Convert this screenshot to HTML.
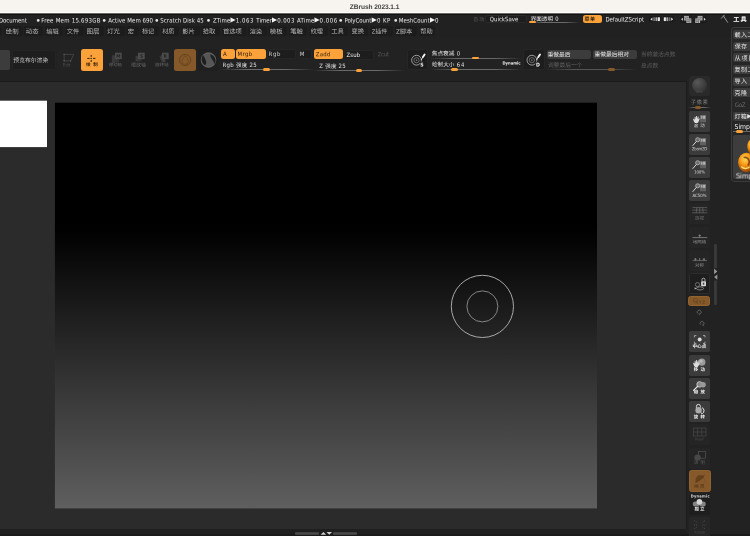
<!DOCTYPE html>
<html lang="zh">
<head>
<meta charset="utf-8">
<title>ZBrush 2023.1.1</title>
<style>
html,body{margin:0;padding:0;}
body{will-change:transform;width:750px;height:536px;overflow:hidden;background:#222;position:relative;font-family:"DejaVu Sans Condensed","Liberation Sans","Noto Sans CJK SC",sans-serif;color:#ddd;}
div,svg{position:absolute;box-sizing:border-box;white-space:nowrap;}
.t,.st{line-height:1;transform-origin:0 0;}
.c{line-height:1;text-align:center;}
#title{left:0;top:0;width:750px;height:14px;background:linear-gradient(to bottom,#f7f3ee 0,#f7f3ee 11.5px,#fefdfc 12.1px,#fefdfc 12.6px,#a9a7a4 13.2px,#2a2a2a 13.8px,#0e0e0e 14px);}
#status{left:0;top:14px;width:750px;height:11.6px;background:linear-gradient(to bottom,#0e0e0e 0,#141414 0.7px,#212121 1.4px);}
.st{color:#ececec;}
#menurow{left:0;top:25.6px;width:750px;height:12.4px;background:#212121;}
.mb{top:26.3px;height:10.1px;background:#1c1c1c;border-radius:2.5px;}
#toolbar{left:0;top:38px;width:750px;height:43px;background:#222;}
#docpanel{left:0;top:81px;width:687px;height:448.4px;background:#2b2b2b;border-top:1px solid #1a1a1a;border-right:1px solid #1b1b1b;}
#bottombar{left:0;top:529.3px;width:686.4px;height:7px;background:#1f1f1f;}
#bstrip{left:0;top:534.2px;width:750px;height:2px;background:#1a1a1a;}
.or{background:#fba23a;color:#2e1c08;}
.dor{background:#85592a;}
.b{border-radius:2px;}
.dkb{background:#1d1d1d;border:0.5px solid #262626}
.gb{background:#3c3c3c}
.sl{height:1px;background:linear-gradient(to right,rgba(110,110,110,0),#6a6a6a 30%,#6a6a6a 70%,rgba(110,110,110,0));}
.kn{height:3px;border-radius:1.5px;background:#fba23a;}
.kn.dor{background:#85592a;}
.sb{left:688.9px;width:21.2px;height:21.1px;border-radius:1.8px;background:#3b3b3b;}
.sb.dim{background:#252525;}
.sb.dk{background:#1e1e1e;border:0.5px solid #2c2c2c;}
.tp{left:733.4px;width:20px;height:9px;background:#3c3c3c;border-radius:2px;}
</style>
</head>
<body>
<div id="title"></div>
<div class="t" style="left:349px;top:3px;transform:translate(0.77px,0.99px) rotate(0.03deg);font-size:6.6px;color:#454545;font-weight:bold;letter-spacing:-0.068px;font-family:'Liberation Sans',sans-serif;">ZBrush 2023.1.1</div>
<div id="status"></div><div id="menurow"></div><div id="toolbar"></div><div id="docpanel"></div><div id="bottombar"></div><div id="bstrip"></div><svg style="left:0;top:90px" width="610" height="430" viewBox="0 90 610 430"><defs><linearGradient id="cg" x1="0" y1="0" x2="0" y2="1"><stop offset="0" stop-color="#000"/><stop offset="0.295" stop-color="#000"/><stop offset="0.315" stop-color="#010101"/><stop offset="0.34" stop-color="#040404"/><stop offset="1" stop-color="#5f5f5f"/></linearGradient></defs><rect x="0" y="100.7" width="47" height="46.4" fill="#fff"/><rect x="54.9" y="102.7" width="542.1" height="405.7" fill="url(#cg)"/></svg>
<div class="st" style="left:-2px;top:17px;transform:translate(0.90px,0.59px) rotate(0.03deg);font-size:6.05px;letter-spacing:-0.032px;">Document</div>
<svg style="left:35px;top:17px" width="8" height="7" viewBox="35 17 8 7"><circle cx="38.2" cy="20.45" r="1.35" fill="#e6e6e6"/></svg>
<div class="st" style="left:41px;top:17px;transform:translate(0.20px,0.59px) rotate(0.03deg);font-size:6.05px;letter-spacing:0.245px;">Free Mem 15.693GB</div>
<svg style="left:101px;top:17px" width="8" height="7" viewBox="101 17 8 7"><circle cx="104.2" cy="20.45" r="1.35" fill="#e6e6e6"/></svg>
<div class="st" style="left:108px;top:17px;transform:translate(0.30px,0.59px) rotate(0.03deg);font-size:6.05px;letter-spacing:0.060px;">Active Mem 690</div>
<svg style="left:153px;top:17px" width="8" height="7" viewBox="153 17 8 7"><circle cx="156.8" cy="20.45" r="1.35" fill="#e6e6e6"/></svg>
<div class="st" style="left:160px;top:17px;transform:translate(0.32px,0.59px) rotate(0.03deg);font-size:6.05px;letter-spacing:0.052px;">Scratch Disk 45</div>
<svg style="left:205px;top:17px" width="8" height="7" viewBox="205 17 8 7"><circle cx="208.5" cy="20.45" r="1.35" fill="#e6e6e6"/></svg>
<div class="st" style="left:213px;top:17px;transform:translate(0.05px,0.59px) rotate(0.03deg);font-size:6.05px;letter-spacing:0.050px;">ZTime</div>
<div class="t" style="left:230px;top:16px;transform:translate(0.60px,0.87px) rotate(0.03deg);font-size:6.6px;color:#f4f4f4;font-family:'DejaVu Sans',sans-serif;">▶</div>
<div class="st" style="left:235px;top:17px;transform:translate(0.68px,0.59px) rotate(0.03deg);font-size:6.05px;letter-spacing:0.550px;">1.063</div>
<div class="st" style="left:256px;top:17px;transform:translate(0.30px,0.59px) rotate(0.03deg);font-size:6.05px;letter-spacing:-0.025px;">Timer</div>
<div class="t" style="left:272px;top:16px;transform:translate(0.10px,0.87px) rotate(0.03deg);font-size:6.6px;color:#f4f4f4;font-family:'DejaVu Sans',sans-serif;">▶</div>
<div class="st" style="left:277px;top:17px;transform:translate(0.23px,0.59px) rotate(0.03deg);font-size:6.05px;letter-spacing:0.412px;">0.003</div>
<div class="st" style="left:297px;top:17px;transform:translate(0.00px,0.59px) rotate(0.03deg);font-size:6.05px;letter-spacing:0.188px;">ATime</div>
<div class="t" style="left:314px;top:16px;transform:translate(0.60px,0.87px) rotate(0.03deg);font-size:6.6px;color:#f4f4f4;font-family:'DejaVu Sans',sans-serif;">▶</div>
<div class="st" style="left:319px;top:17px;transform:translate(0.62px,0.59px) rotate(0.03deg);font-size:6.05px;letter-spacing:0.506px;">0.006</div>
<svg style="left:337px;top:17px" width="8" height="7" viewBox="337 17 8 7"><circle cx="340.7" cy="20.45" r="1.35" fill="#e6e6e6"/></svg>
<div class="st" style="left:344px;top:17px;transform:translate(0.50px,0.59px) rotate(0.03deg);font-size:6.05px;letter-spacing:-0.056px;">PolyCount</div>
<div class="t" style="left:371px;top:16px;transform:translate(0.70px,0.87px) rotate(0.03deg);font-size:6.6px;color:#f4f4f4;font-family:'DejaVu Sans',sans-serif;">▶</div>
<div class="st" style="left:376px;top:17px;transform:translate(0.93px,0.59px) rotate(0.03deg);font-size:6.05px;letter-spacing:0.400px;">0 KP</div>
<svg style="left:392px;top:17px" width="8" height="7" viewBox="392 17 8 7"><circle cx="395.7" cy="20.45" r="1.35" fill="#e6e6e6"/></svg>
<div class="st" style="left:398px;top:17px;transform:translate(0.80px,0.59px) rotate(0.03deg);font-size:6.05px;letter-spacing:0.053px;">MeshCount</div>
<div class="t" style="left:430px;top:16px;transform:translate(0.00px,0.87px) rotate(0.03deg);font-size:6.6px;color:#f4f4f4;font-family:'DejaVu Sans',sans-serif;">▶</div>
<div class="st" style="left:435px;top:17px;transform:translate(0.02px,0.59px) rotate(0.03deg);font-size:6.05px;">0</div>
<div class="t" style="left:473px;top:17px;transform:translate(0.25px,0.04px) rotate(0.03deg);font-size:4.9px;color:#585858;letter-spacing:1.050px;">自动</div>
<div class="b" style="left:484.8px;top:15.2px;width:42.4px;height:7.8px;background:#1d1d1d;border:0.5px solid #2a2a2a;border-radius:2.5px"></div>
<div class="st" style="left:489px;top:16px;transform:translate(0.75px,0.29px) rotate(0.03deg);font-size:6.05px;letter-spacing:-0.031px;">QuickSave</div>
<div class="t" style="left:530px;top:16px;transform:translate(0.65px,0.67px) rotate(0.03deg);font-size:5.6px;color:#ececec;letter-spacing:-0.017px;">界面透明</div>
<div class="t" style="left:555px;top:16px;transform:translate(0.23px,0.85px) rotate(0.03deg);font-size:5.8px;color:#ececec;">0</div>
<div class="sl" style="left:529px;top:21.8px;width:51px;"></div><div class="kn" style="left:528.7px;top:20.9px;width:7.2px;height:2.6px"></div>
<div class="or b" style="left:582.8px;top:15.4px;width:19.5px;height:7.8px;border-radius:2.5px"></div>
<div class="t" style="left:584px;top:16px;transform:translate(0.58px,0.81px) rotate(0.03deg);font-size:5.0px;color:#2e1c08;font-weight:bold;letter-spacing:0.450px;">菜单</div>
<div class="st" style="left:605px;top:16px;transform:translate(0.40px,0.39px) rotate(0.03deg);font-size:6.05px;letter-spacing:-0.058px;">DefaultZScript</div>
<svg style="left:648px;top:14px" width="62" height="11" viewBox="648 14 62 11">
<rect x="649.1" y="16.1" width="11.7" height="5.9" rx="1.8" fill="#191919"/><rect x="662.7" y="16.1" width="11.6" height="5.9" rx="1.8" fill="#191919"/>
<rect x="680" y="15.4" width="12.2" height="8" rx="1.8" fill="#1c1c1c"/><rect x="694.4" y="15.4" width="11.8" height="8" rx="1.8" fill="#1c1c1c"/>
<path d="M650.4 19.2l2-1.6v3.2z" fill="#e0e0e0"/><rect x="653.2" y="17.3" width="1.8" height="3.8" fill="#6e6e6e"/><rect x="655.5" y="17.3" width="1.8" height="3.8" fill="#a8a8a8"/><rect x="657.8" y="17.3" width="2.1" height="3.8" fill="#ececec"/>
<rect x="663.8" y="17.3" width="2.1" height="3.8" fill="#ececec"/><rect x="666.4" y="17.3" width="1.8" height="3.8" fill="#a8a8a8"/><rect x="668.7" y="17.3" width="1.8" height="3.8" fill="#6e6e6e"/><path d="M673.2 19.2l-2-1.6v3.2z" fill="#e0e0e0"/>
<path d="M681.1 19.3l1.8-1.5v3z" fill="#e0e0e0"/><rect x="684" y="15.9" width="4.9" height="4.6" fill="#b4b4b4"/><path d="M684 17.2h4.9M687.3 17.2v3.3" stroke="#555" stroke-width="0.55" fill="none"/><rect x="684.7" y="18.0" width="1.9" height="1.8" fill="#7a7a7a"/><rect x="686.4" y="18.4" width="4.9" height="4.6" fill="#b4b4b4"/><path d="M686.4 19.7h4.9M689.6999999999999 19.7v3.3" stroke="#555" stroke-width="0.55" fill="none"/><rect x="687.1" y="20.5" width="1.9" height="1.8" fill="#7a7a7a"/>
<rect x="697.6" y="15.9" width="4.9" height="4.6" fill="#b4b4b4"/><path d="M697.6 17.2h4.9M700.9 17.2v3.3" stroke="#555" stroke-width="0.55" fill="none"/><rect x="698.3000000000001" y="18.0" width="1.9" height="1.8" fill="#7a7a7a"/><rect x="695.2" y="18.4" width="4.9" height="4.6" fill="#b4b4b4"/><path d="M695.2 19.7h4.9M698.5 19.7v3.3" stroke="#555" stroke-width="0.55" fill="none"/><rect x="695.9000000000001" y="20.5" width="1.9" height="1.8" fill="#7a7a7a"/><path d="M705.7 19.3l-1.8-1.5v3z" fill="#e0e0e0"/>
</svg>
<svg style="left:719px;top:13px" width="12" height="12" viewBox="719 13 12 12"><path d="M721.4 18.3l2.9-3.2M723.5 16.1l4.1 6.2" stroke="#a0a0a0" stroke-width="0.9" fill="none" stroke-linecap="round"/></svg>
<div class="t" style="left:733px;top:16px;transform:translate(0.25px,0.46px) rotate(0.03deg);font-size:6.2px;color:#fff;font-weight:bold;letter-spacing:1.000px;">工具</div>
<div class="mb" style="left:-3px;width:4.9px"></div>
<div class="mb" style="left:4.2px;width:18.5px"></div>
<div class="t" style="left:5px;top:28px;transform:translate(0.65px,0.65px) rotate(0.03deg);font-size:6.41px;color:#b6b6b6;letter-spacing:0.075px;">绘制</div>
<div class="mb" style="left:24.4px;width:18.6px"></div>
<div class="t" style="left:25px;top:28px;transform:translate(0.73px,0.44px) rotate(0.03deg);font-size:6.37px;color:#b6b6b6;letter-spacing:0.100px;">动态</div>
<div class="mb" style="left:44.7px;width:18.8px"></div>
<div class="t" style="left:46px;top:28px;transform:translate(0.15px,0.63px) rotate(0.03deg);font-size:6.31px;color:#b6b6b6;letter-spacing:-0.025px;">编辑</div>
<div class="mb" style="left:65.2px;width:18.5px"></div>
<div class="t" style="left:66px;top:28px;transform:translate(0.65px,0.63px) rotate(0.03deg);font-size:6.27px;color:#b6b6b6;">文件</div>
<div class="mb" style="left:85.4px;width:18.8px"></div>
<div class="t" style="left:86px;top:28px;transform:translate(0.60px,0.63px) rotate(0.03deg);font-size:6.55px;color:#b6b6b6;letter-spacing:-0.050px;">图层</div>
<div class="mb" style="left:105.9px;width:18.7px"></div>
<div class="t" style="left:107px;top:28px;transform:translate(0.35px,0.43px) rotate(0.03deg);font-size:6.27px;color:#b6b6b6;">灯光</div>
<div class="mb" style="left:126.3px;width:12.3px"></div>
<div class="t" style="left:127px;top:28px;transform:translate(0.75px,0.58px) rotate(0.03deg);font-size:6.2px;color:#b6b6b6;">宏</div>
<div class="mb" style="left:140.3px;width:18.6px"></div>
<div class="t" style="left:141px;top:28px;transform:translate(0.88px,0.49px) rotate(0.03deg);font-size:6.2px;color:#b6b6b6;">标记</div>
<div class="mb" style="left:160.6px;width:18.7px"></div>
<div class="t" style="left:162px;top:28px;transform:translate(0.18px,0.54px) rotate(0.03deg);font-size:6.2px;color:#b6b6b6;">材质</div>
<div class="mb" style="left:181.0px;width:18.5px"></div>
<div class="t" style="left:182px;top:28px;transform:translate(0.32px,0.63px) rotate(0.03deg);font-size:6.35px;color:#b6b6b6;letter-spacing:-0.050px;">影片</div>
<div class="mb" style="left:201.2px;width:18.7px"></div>
<div class="t" style="left:202px;top:28px;transform:translate(0.65px,0.61px) rotate(0.03deg);font-size:6.34px;color:#b6b6b6;letter-spacing:0.075px;">拾取</div>
<div class="mb" style="left:221.6px;width:25.0px"></div>
<div class="t" style="left:222px;top:28px;transform:translate(0.93px,0.47px) rotate(0.03deg);font-size:6.34px;color:#b6b6b6;letter-spacing:0.012px;">首选项</div>
<div class="mb" style="left:248.3px;width:18.3px"></div>
<div class="t" style="left:249px;top:28px;transform:translate(0.75px,0.69px) rotate(0.03deg);font-size:6.27px;color:#b6b6b6;">渲染</div>
<div class="mb" style="left:268.3px;width:18.7px"></div>
<div class="t" style="left:269px;top:28px;transform:translate(0.75px,0.64px) rotate(0.03deg);font-size:6.42px;color:#b6b6b6;letter-spacing:0.025px;">模板</div>
<div class="mb" style="left:288.7px;width:18.8px"></div>
<div class="t" style="left:290px;top:28px;transform:translate(0.15px,0.52px) rotate(0.03deg);font-size:6.38px;color:#b6b6b6;letter-spacing:0.050px;">笔触</div>
<div class="mb" style="left:309.2px;width:18.8px"></div>
<div class="t" style="left:310px;top:28px;transform:translate(0.65px,0.57px) rotate(0.03deg);font-size:6.2px;color:#b6b6b6;">纹理</div>
<div class="mb" style="left:329.7px;width:18.8px"></div>
<div class="t" style="left:331px;top:28px;transform:translate(0.15px,0.62px) rotate(0.03deg);font-size:6.27px;color:#b6b6b6;">工具</div>
<div class="mb" style="left:350.2px;width:18.3px"></div>
<div class="t" style="left:351px;top:28px;transform:translate(0.52px,0.61px) rotate(0.03deg);font-size:6.33px;color:#b6b6b6;">变换</div>
<div class="mb" style="left:370.2px;width:22.6px"></div>
<div class="t" style="left:371px;top:28px;transform:translate(0.65px,0.51px) rotate(0.03deg);font-size:6.01px;color:#b6b6b6;letter-spacing:-0.025px;">Z插件</div>
<div class="mb" style="left:394.5px;width:22.6px"></div>
<div class="t" style="left:395px;top:28px;transform:translate(0.95px,0.65px) rotate(0.03deg);font-size:6.3px;color:#b6b6b6;">Z脚本</div>
<div class="mb" style="left:418.8px;width:15.8px"></div>
<div class="t" style="left:420px;top:28px;transform:translate(0.25px,0.59px) rotate(0.03deg);font-size:6.21px;color:#b6b6b6;letter-spacing:-0.050px;">帮助</div>
<div style="left:0;top:49.6px;width:10px;height:20.8px;background:#3c3c3c;border-radius:0 2px 2px 0"></div>
<div class="b" style="left:11.5px;top:49.6px;width:44.8px;height:20.8px;background:#1e1e1e;border:0.5px solid #242424"></div>
<div class="t" style="left:13px;top:58px;transform:translate(0.35px,0.13px) rotate(0.03deg);font-size:5.83px;color:#c8c8c8;letter-spacing:-0.020px;">预览布尔渲染</div>
<div class="b" style="left:58.1px;top:49.4px;width:22.2px;height:20.9px;background:#232323;border-radius:2.5px"></div>
<svg style="left:58px;top:49px" width="23" height="22" viewBox="58 49 23 22"><path d="M64.1 54.4H73.8L70.6 60.9H64.1z" fill="none" stroke="#4a4a4a" stroke-width="0.8"/><path d="M63.5 53.8h1.3v1.3h-1.3zM63.5 60.2h1.3v1.3h-1.3zM69.9 60.2h1.3v1.3h-1.3z" fill="#5a5a5a"/></svg>
<div class="t" style="left:62px;top:63px;transform:translate(0.73px,0.56px) rotate(0.03deg);font-size:4.4px;color:#4e4e4e;letter-spacing:-0.017px;">Edit</div>
<div class="or b" style="left:81.4px;top:49px;width:21.9px;height:22px;border-radius:2.5px"></div>
<svg style="left:81.4px;top:49px" width="21.9" height="22" viewBox="81.4 49 21.9 22"><g stroke="#2e1c08" stroke-width="1" fill="none" stroke-linecap="round"><path d="M91.6 55.3v1.2M91.6 60.3v1.2M88.1 58.4h1.5M93.9 58.4h1.5"/><path d="M91.3 58.4h0.6"/></g></svg>
<div class="t" style="left:85px;top:63px;transform:translate(0.97px,0.05px) rotate(0.03deg);font-size:4.5px;color:#2e1c08;font-weight:bold;">绘</div>
<div class="t" style="left:93px;top:63px;transform:translate(0.17px,0.12px) rotate(0.03deg);font-size:4.5px;color:#2e1c08;font-weight:bold;">制</div>
<svg style="left:109px;top:50px" width="16" height="16" viewBox="109 50 16 16"><rect x="111.9" y="55.3" width="3.4" height="8" fill="#3a3a3a"/><rect x="115" y="58.8" width="4" height="3.4" fill="#343434"/><rect x="115" y="52.7" width="6.7" height="6.4" fill="#4c4c4c"/></svg>
<div class="t" style="left:116px;top:54px;transform:translate(0.16px,0.70px) rotate(0.03deg);font-size:4.8px;color:#242424;font-weight:bold;">M</div>
<div class="t" style="left:108px;top:63px;transform:translate(0.97px,0.31px) rotate(0.03deg);font-size:4.34px;color:#626262;letter-spacing:-0.012px;">移动轴</div>
<svg style="left:132.1px;top:50px" width="16" height="16" viewBox="132.1 50 16 16"><rect x="135.7" y="55.8" width="3" height="5.6" fill="#3a3a3a"/><rect x="138.1" y="58.8" width="3.6" height="2.6" fill="#343434"/><rect x="138.1" y="52.7" width="6.7" height="6.4" fill="#4c4c4c"/></svg>
<div class="t" style="left:139px;top:54px;transform:translate(0.89px,0.70px) rotate(0.03deg);font-size:4.8px;color:#242424;font-weight:bold;">S</div>
<div class="t" style="left:131px;top:62px;transform:translate(0.05px,0.45px) rotate(0.03deg);font-size:4.93px;color:#626262;letter-spacing:0.037px;">缩放轴</div>
<svg style="left:155.9px;top:50px" width="16" height="16" viewBox="155.9 50 16 16"><path d="M159.3 56.6l3.4-2 2.6 6.4-3.6 1.4z" fill="#383838"/><path d="M160.70000000000002 55.6l3-1 2 6.8-3 1z" fill="#404040"/><rect x="161.9" y="52.7" width="6.7" height="6.4" fill="#4c4c4c"/></svg>
<div class="t" style="left:163px;top:54px;transform:translate(0.44px,0.70px) rotate(0.03deg);font-size:4.8px;color:#242424;font-weight:bold;">R</div>
<div class="t" style="left:155px;top:63px;transform:translate(0.07px,0.36px) rotate(0.03deg);font-size:4.54px;color:#626262;letter-spacing:-0.025px;">旋转轴</div>
<div class="dor b" style="left:174px;top:49px;width:22.2px;height:22px;border-radius:2.5px"></div>
<svg style="left:174px;top:49px" width="22.2" height="22" viewBox="174 49 22.2 22"><circle cx="185.1" cy="60" r="5.6" fill="none" stroke="#5e3c1a" stroke-width="0.8"/><path d="M185.1 55.6c1.8 2.4 3.2 4 3.2 5.6a3.2 3.2 0 0 1-6.4 0c0-1.6 1.4-3.2 3.2-5.6z" fill="none" stroke="#684219" stroke-width="0.7"/></svg>
<div class="b" style="left:197.7px;top:49.2px;width:21.7px;height:22px;background:#1f1f1f"></div>
<svg style="left:199px;top:51px" width="19" height="18" viewBox="199 51 19 18"><circle cx="208.5" cy="60" r="7.3" fill="#565656" stroke="#727272" stroke-width="0.7"/><path d="M203.2 55.1A6.9 6.9 0 0 0 204.7 65.2Q206.6 64.4 206.2 62Q205.8 59.6 204.7 57.9Q203.9 56.6 203.2 55.1z" fill="#1e1e1e"/><path d="M210.2 54.2A6.9 6.9 0 0 1 214.7 64.2Q213.9 62 213.3 61.3Q212.4 59.9 211.6 58.6Q210.4 56.6 210.2 54.2z" fill="#1e1e1e"/></svg>
<div class="b or" style="left:221.1px;top:49.3px;width:13.6px;height:9.8px;border-radius:2.5px"></div>
<div class="t" style="left:222px;top:51px;transform:translate(0.90px,0.05px) rotate(0.03deg);font-size:6px;color:#2e1c08;">A</div>
<div class="b or" style="left:236.4px;top:49.3px;width:29.2px;height:9.8px;border-radius:2.5px"></div>
<div class="t" style="left:237px;top:51px;transform:translate(0.50px,0.05px) rotate(0.03deg);font-size:6px;color:#2e1c08;letter-spacing:0.375px;">Mrgb</div>
<div class="b dkb" style="left:267.3px;top:49.3px;width:29.0px;height:9.8px;border-radius:2.5px"></div>
<div class="t" style="left:268px;top:51px;transform:translate(0.60px,0.05px) rotate(0.03deg);font-size:6px;color:#d0d0d0;letter-spacing:0.662px;">Rgb</div>
<div class="b dkb" style="left:298.7px;top:49.3px;width:13.6px;height:9.8px;border-radius:2.5px"></div>
<div class="t" style="left:299px;top:51px;transform:translate(0.80px,0.05px) rotate(0.03deg);font-size:6px;color:#d0d0d0;">M</div>
<div class="b or" style="left:314px;top:49.3px;width:29.1px;height:9.8px;border-radius:2.5px"></div>
<div class="t" style="left:315px;top:51px;transform:translate(0.75px,0.15px) rotate(0.03deg);font-size:6px;color:#2e1c08;letter-spacing:0.192px;">Zadd</div>
<div class="b dkb" style="left:344.4px;top:50.2px;width:29.6px;height:9.5px;border-radius:2.5px"></div>
<div class="t" style="left:346px;top:52px;transform:translate(0.45px,0.10px) rotate(0.03deg);font-size:6px;color:#f0f0f0;letter-spacing:0.142px;">Zsub</div>
<div class="t" style="left:377px;top:51px;transform:translate(0.75px,0.30px) rotate(0.03deg);font-size:6px;color:#555;letter-spacing:-0.325px;">Zcut</div>
<div class="t" style="left:222px;top:62px;transform:translate(0.40px,0.05px) rotate(0.03deg);font-size:6.0px;color:#e0e0e0;letter-spacing:0.300px;">Rgb <span style="font-size:5.5px">强度</span> 25</div>
<div class="sl" style="left:220px;top:69.1px;width:94px"></div><div class="kn" style="left:263.3px;top:68.2px;width:6.7px;height:2.8px"></div>
<div class="t" style="left:319px;top:63px;transform:translate(0.35px,0.00px) rotate(0.03deg);font-size:6.0px;color:#e0e0e0;letter-spacing:0.221px;">Z <span style="font-size:5.5px">强度</span> 25</div>
<div class="sl" style="left:313px;top:69.9px;width:92px"></div><div class="kn" style="left:355.7px;top:69px;width:6.7px;height:2.8px"></div>
<div class="b" style="left:406.7px;top:49.3px;width:21.5px;height:21.1px;background:#1d1d1d;border:0.5px solid #262626;border-radius:2.5px"></div>
<svg style="left:406.7px;top:49.3px" width="21.5" height="21.1" viewBox="406.7 49.3 21.5 21.1"><circle cx="416.2" cy="60.5" r="4.9" fill="none" stroke="#c4c4c4" stroke-width="0.75"/><circle cx="416.2" cy="60.5" r="2.6" fill="none" stroke="#9a9a9a" stroke-width="0.6"/><path d="M415.4 60.5h1.6M416.2 59.7v1.6" stroke="#bbb" stroke-width="0.4"/><rect x="419.59999999999997" y="61.9" width="5" height="5.4" fill="#1d1d1d"/><path d="M421.09999999999997 60.0l1.3-2.4" stroke="#ddd" stroke-width="1" stroke-linecap="round"/><path d="M422.59999999999997 57.3l1.7-2.5" stroke="#f6f6f6" stroke-width="1.9" stroke-linecap="round"/></svg>
<div class="t" style="left:420px;top:62px;transform:translate(0.32px,0.39px) rotate(0.03deg);font-size:5.2px;color:#f0f0f0;font-weight:bold;">S</div>
<div class="b" style="left:523px;top:49.3px;width:21.5px;height:21.1px;background:#1d1d1d;border:0.5px solid #262626;border-radius:2.5px"></div>
<svg style="left:523px;top:49.3px" width="21.5" height="21.1" viewBox="523 49.3 21.5 21.1"><circle cx="531.9" cy="60.5" r="4.9" fill="none" stroke="#c4c4c4" stroke-width="0.75"/><circle cx="531.9" cy="60.5" r="2.6" fill="none" stroke="#9a9a9a" stroke-width="0.6"/><path d="M531.1 60.5h1.6M531.9 59.7v1.6" stroke="#bbb" stroke-width="0.4"/><rect x="535.3" y="61.9" width="5" height="5.4" fill="#1d1d1d"/><path d="M536.8 60.0l1.3-2.4" stroke="#ddd" stroke-width="1" stroke-linecap="round"/><path d="M538.3 57.3l1.7-2.5" stroke="#f6f6f6" stroke-width="1.9" stroke-linecap="round"/></svg>
<div class="t" style="left:536px;top:62px;transform:translate(0.12px,0.39px) rotate(0.03deg);font-size:5.2px;color:#f0f0f0;font-weight:bold;">D</div>
<div class="t" style="left:431px;top:51px;transform:translate(0.85px,0.21px) rotate(0.03deg);font-size:5.65px;color:#e0e0e0;letter-spacing:-0.008px;">焦点衰减</div>
<div class="t" style="left:456px;top:51px;transform:translate(0.73px,0.45px) rotate(0.03deg);font-size:5.8px;color:#e0e0e0;">0</div>
<div class="sl" style="left:430px;top:57.5px;width:92px"></div><div class="kn" style="left:472px;top:56.5px;width:7.4px;height:2.9px"></div>
<div class="t" style="left:431px;top:62px;transform:translate(0.98px,0.37px) rotate(0.03deg);font-size:5.58px;color:#e0e0e0;letter-spacing:0.033px;">绘制大小</div>
<div class="t" style="left:456px;top:62px;transform:translate(0.73px,0.75px) rotate(0.03deg);font-size:5.8px;color:#e0e0e0;letter-spacing:1.000px;">64</div>
<div class="sl" style="left:430px;top:68.8px;width:92px"></div><div class="kn" style="left:451px;top:68px;width:7.2px;height:2.9px"></div>
<div class="t" style="left:502px;top:61px;transform:translate(0.43px,0.50px) rotate(0.03deg);font-size:4.2px;color:#f0f0f0;font-weight:bold;letter-spacing:-0.021px;">Dynamic</div>
<div class="b gb" style="left:546.7px;top:49.7px;width:44.2px;height:9.1px;border-radius:2.5px"></div>
<div class="t" style="left:547px;top:52px;transform:translate(0.65px,0.49px) rotate(0.03deg);font-size:5.67px;color:#ececec;letter-spacing:0.025px;">重做最后</div>
<div class="b gb" style="left:593.1px;top:49.7px;width:44px;height:9.2px;border-radius:2.5px"></div>
<div class="t" style="left:594px;top:52px;transform:translate(0.45px,0.28px) rotate(0.03deg);font-size:5.75px;color:#ececec;">重做最后相对</div>
<div class="t" style="left:548px;top:62px;transform:translate(0.05px,0.91px) rotate(0.03deg);font-size:5.71px;color:#606060;letter-spacing:0.010px;">调整最后一个</div>
<div class="sl" style="left:546px;top:69.1px;width:91px;opacity:.7"></div><div class="kn dor" style="left:608px;top:68.2px;width:7.1px;height:2.8px"></div>
<div class="t" style="left:640px;top:52px;transform:translate(0.67px,0.12px) rotate(0.03deg);font-size:5.8px;color:#5e5e5e;">当前激活点数</div>
<div class="t" style="left:641px;top:63px;transform:translate(0.05px,0.39px) rotate(0.03deg);font-size:5.73px;color:#5e5e5e;letter-spacing:-0.025px;">总点数</div>
<svg style="left:445px;top:269px" width="76" height="76" viewBox="0 0 76 76"><circle cx="37.4" cy="37.4" r="31.1" fill="none" stroke="#b8b8b8" stroke-width="0.9"/><circle cx="37.4" cy="37.4" r="15.5" fill="none" stroke="#a0a0a0" stroke-width="0.8"/></svg>
<div style="left:294.8px;top:531.6px;width:24.2px;height:3.2px;background:linear-gradient(#3a3a3a,#4a4a4a 50%,#3a3a3a);border-radius:1px"></div><div style="left:332.5px;top:531.6px;width:24.8px;height:3.2px;background:linear-gradient(#3a3a3a,#4a4a4a 50%,#3a3a3a);border-radius:1px"></div>
<svg style="left:319px;top:530px" width="14" height="6" viewBox="319 530 14 6"><path d="M320.6 534.8l2.75-2.9 2.75 2.9z" fill="#d0d0d0"/><path d="M326.5 532h5.5l-2.75 2.8z" fill="#d0d0d0"/></svg>
<div style="left:714.1px;top:243.5px;width:2.5px;height:61.2px;background:#383838;border-radius:1px"></div>
<svg style="left:712px;top:266px" width="8" height="16" viewBox="0 0 8 16"><rect x="1.6" y="2" width="3.6" height="12.4" fill="#222"/><path d="M2.1 2.6l3.2 2.8-3.2 2.8z" fill="#999"/><path d="M5.3 8.4l-3.2 2.7 3.2 2.7z" fill="#999"/></svg>
<div class="b" style="left:688.7px;top:75.9px;width:21.5px;height:20.6px;background:#2a2a2a;border-radius:2.5px"></div>
<svg style="left:688.7px;top:75.9px" width="21.5" height="20.6" viewBox="0 0 21.5 20.6"><defs><radialGradient id="sg" cx="0.35" cy="0.3" r="0.8"><stop offset="0" stop-color="#585858"/><stop offset="1" stop-color="#2e2e2e"/></radialGradient></defs><circle cx="10.6" cy="9.5" r="7.4" fill="url(#sg)"/></svg>
<div class="t" style="left:696px;top:90px;transform:translate(0.31px,0.83px) rotate(0.03deg);font-size:3.4px;color:#555;">SPix</div>
<div class="t" style="left:690px;top:99px;transform:translate(0.65px,0.94px) rotate(0.03deg);font-size:5.4px;color:#808080;letter-spacing:0.525px;">子像素</div>
<div class="sl" style="left:688px;top:106.7px;width:23px"></div><div class="kn dor" style="left:694.8px;top:105.7px;width:6.7px;height:2.9px"></div>
<div class="sb " style="top:110.5px"><svg style="left:0;top:0" width="21.2" height="20.9" viewBox="0 0 21.2 20.9"><rect x="11.1" y="4.1" width="5.9" height="7.1" fill="#747474"/><rect x="12.2" y="4.9" width="4" height="2.8" fill="#b4b4b4"/><path d="M11.1 8.9h5.9M11.1 10.2h5.9" stroke="#4a4a4a" stroke-width="0.6"/><path d="M13.6 4.1v7.1" stroke="#555" stroke-width="0.5"/><path d="M4.3 7.9l0.7-0.4 0.9 1.4 -0.3-3 0.8-0.2 0.6 2.5 0.1-3.2 0.8-0.1 0.4 3.2 0.5-2.7 0.8 0.2-0.2 3 0.7-1.3 0.6 0.4-1 2.9c-0.3 0.7-0.6 1.1-1 1.4h-2.7c-0.8-0.9-1.5-2.2-1.9-4.1z" fill="#dedede"/></svg></div>
<div class="t" style="left:693px;top:124px;transform:translate(0.65px,0.14px) rotate(0.03deg);font-size:4.4px;color:#d4d4d4;">滚</div>
<div class="t" style="left:700px;top:123px;transform:translate(0.15px,0.94px) rotate(0.03deg);font-size:4.4px;color:#d4d4d4;">动</div>
<div class="sb " style="top:133.9px"><svg style="left:0;top:0" width="21.2" height="20.9" viewBox="0 0 21.2 20.9"><rect x="11.1" y="4.1" width="5.9" height="7.1" fill="#747474"/><rect x="12.2" y="4.9" width="4" height="2.8" fill="#b4b4b4"/><path d="M11.1 8.9h5.9M11.1 10.2h5.9" stroke="#4a4a4a" stroke-width="0.6"/><path d="M13.6 4.1v7.1" stroke="#555" stroke-width="0.5"/><circle cx="8.7" cy="5.8" r="2.1" fill="#6c6c6c" stroke="#c4c4c4" stroke-width="0.7"/><path d="M7.2 7.6l-3.3 3.9" stroke="#d4d4d4" stroke-width="1" stroke-linecap="round"/></svg></div>
<div class="t" style="left:691px;top:147px;transform:translate(0.98px,0.26px) rotate(0.03deg);font-size:4.4px;color:#d8d8d8;letter-spacing:-0.345px;">Zoom2D</div>
<div class="sb " style="top:157.0px"><svg style="left:0;top:0" width="21.2" height="20.9" viewBox="0 0 21.2 20.9"><rect x="11.1" y="4.1" width="5.9" height="7.1" fill="#747474"/><rect x="12.2" y="4.9" width="4" height="2.8" fill="#b4b4b4"/><path d="M11.1 8.9h5.9M11.1 10.2h5.9" stroke="#4a4a4a" stroke-width="0.6"/><path d="M13.6 4.1v7.1" stroke="#555" stroke-width="0.5"/><circle cx="8.7" cy="5.8" r="2.1" fill="#6c6c6c" stroke="#c4c4c4" stroke-width="0.7"/><path d="M7.2 7.6l-3.3 3.9" stroke="#d4d4d4" stroke-width="1" stroke-linecap="round"/></svg></div>
<div class="t" style="left:694px;top:170px;transform:translate(0.12px,0.56px) rotate(0.03deg);font-size:4.4px;color:#d8d8d8;letter-spacing:-0.150px;">100%</div>
<div class="sb " style="top:180.1px"><svg style="left:0;top:0" width="21.2" height="20.9" viewBox="0 0 21.2 20.9"><rect x="11.1" y="4.1" width="5.9" height="7.1" fill="#747474"/><rect x="12.2" y="4.9" width="4" height="2.8" fill="#b4b4b4"/><path d="M11.1 8.9h5.9M11.1 10.2h5.9" stroke="#4a4a4a" stroke-width="0.6"/><path d="M13.6 4.1v7.1" stroke="#555" stroke-width="0.5"/><circle cx="8.7" cy="5.8" r="2.1" fill="#6c6c6c" stroke="#c4c4c4" stroke-width="0.7"/><path d="M7.2 7.6l-3.3 3.9" stroke="#d4d4d4" stroke-width="1" stroke-linecap="round"/></svg></div>
<div class="t" style="left:692px;top:194px;transform:translate(0.40px,0.06px) rotate(0.03deg);font-size:4.4px;color:#d8d8d8;">AC50%</div>
<div class="sb dim" style="top:203.3px"><svg style="left:0;top:0" width="21.2" height="20.9" viewBox="0 0 21.2 20.9"><g stroke="#6e6e6e" stroke-width="0.65" fill="none"><path d="M3.4 4.6h14.6M3.2 7.1h15M3 9.8h15.4"/><path d="M7.8 4.6l-0.6 5.2M10.7 4.6v5.2M13.6 4.6l0.6 5.2"/></g></svg></div>
<div class="t" style="left:694px;top:216px;transform:translate(0.81px,0.74px) rotate(0.03deg);font-size:4.6px;color:#6c6c6c;">透视</div>
<div class="sb dim" style="top:226.7px"><svg style="left:0;top:0" width="21.2" height="20.9" viewBox="0 0 21.2 20.9"><path d="M3.4 10.6h14.8" stroke="#8a8a8a" stroke-width="0.8"/><path d="M10.7 7.4v3.2M9.5 8.6h2.4" stroke="#8a8a8a" stroke-width="0.8"/></svg></div>
<div class="t" style="left:692px;top:240px;transform:translate(0.88px,0.55px) rotate(0.03deg);font-size:4.4px;color:#8a8a8a;">地网格</div>
<div class="sb dim" style="top:250.1px"><svg style="left:0;top:0" width="21.2" height="20.9" viewBox="0 0 21.2 20.9"><path d="M3.6 10.6h14.4" stroke="#7a7a7a" stroke-width="0.7"/><path d="M6.4 8v2.6M5.2 9.2h2.4M10.7 8v2.6M15 8v2.6M13.8 9.2h2.4" stroke="#8a8a8a" stroke-width="0.8"/></svg></div>
<div class="t" style="left:694px;top:263px;transform:translate(0.88px,0.68px) rotate(0.03deg);font-size:4.6px;color:#8a8a8a;">对称</div>
<div class="sb dk" style="top:273.4px"><svg style="left:0;top:0" width="21.2" height="20.9" viewBox="0 0 21.2 20.9"><rect x="11.1" y="7.2" width="4.9" height="5" rx="0.7" fill="#d4d4d4"/><path d="M12 7.2v-1.5a1.5 1.5 0 0 1 3 0v1.5" fill="none" stroke="#c8c8c8" stroke-width="0.8"/><rect x="12.8" y="8.7" width="1.5" height="2" fill="#444"/><circle cx="7.5" cy="10.6" r="2.1" fill="none" stroke="#8c8c8c" stroke-width="0.7"/><ellipse cx="10" cy="14.4" rx="3.6" ry="1.6" fill="none" stroke="#a0a0a0" stroke-width="0.75"/><path d="M4.6 13.2l2.2 1.2-2.2 1.2z" fill="#b8b8b8"/></svg></div>
<div class="dor b" style="left:688.3px;top:295.9px;width:21.9px;height:10.4px;border-radius:2.5px;border:0.5px solid #93642e"></div>
<svg style="left:688.3px;top:296px" width="21.9" height="10.3" viewBox="688.3 296 21.9 10.3"><path d="M698 300.6a2.2 2 0 1 0-3.6 1.4M694.6 300.6l-0.3 1.6 1.6-0.2" fill="none" stroke="#694420" stroke-width="0.7"/></svg>
<div class="t" style="left:695px;top:300px;transform:translate(0.27px,0.81px) rotate(0.03deg);font-size:4.4px;color:#694420;font-weight:bold;letter-spacing:0.500px;">XYZ</div>
<svg style="left:695px;top:308px" width="12" height="22" viewBox="0 0 12 22"><g fill="none" stroke="#777" stroke-width="0.7"><path d="M2.6 5.4a2 2 0 1 1 2.4 0.6"/><path d="M4.2 5.2v2"/><path d="M5.4 16.6a2 2 0 1 1 2.6 0.6"/><path d="M7.4 16.6l1.4 1.6"/></g></svg>
<div class="sb " style="top:331.1px"><svg style="left:0;top:0" width="21.2" height="20.9" viewBox="0 0 21.2 20.9"><g fill="none" stroke="#c4c4c4" stroke-width="0.75"><path d="M5.4 6.4v-1.8h2M16 6.4v-1.8h-2M5.4 10.6v1.8h2M16 10.6v1.8h-2"/></g><circle cx="10.7" cy="8.6" r="2" fill="#ddd"/></svg></div>
<div class="t" style="left:692px;top:344px;transform:translate(0.50px,0.65px) rotate(0.03deg);font-size:4.6px;color:#f4f4f4;font-weight:bold;">中心点</div>
<div class="sb " style="top:354.5px"><svg style="left:0;top:0" width="21.2" height="20.9" viewBox="0 0 21.2 20.9"><circle cx="12.8" cy="7.2" r="3.6" fill="#9a9a9a"/><circle cx="12" cy="6.2" r="1.6" fill="#bbb"/><path d="M4.3 7.9l0.7-0.4 0.9 1.4 -0.3-3 0.8-0.2 0.6 2.5 0.1-3.2 0.8-0.1 0.4 3.2 0.5-2.7 0.8 0.2-0.2 3 0.7-1.3 0.6 0.4-1 2.9c-0.3 0.7-0.6 1.1-1 1.4h-2.7c-0.8-0.9-1.5-2.2-1.9-4.1z" fill="#dedede"/></svg></div>
<div class="t" style="left:693px;top:367px;transform:translate(0.77px,0.82px) rotate(0.03deg);font-size:4.4px;color:#f0f0f0;font-weight:bold;">移</div>
<div class="t" style="left:700px;top:367px;transform:translate(0.48px,0.94px) rotate(0.03deg);font-size:4.4px;color:#f0f0f0;font-weight:bold;">动</div>
<div class="sb " style="top:377.6px"><svg style="left:0;top:0" width="21.2" height="20.9" viewBox="0 0 21.2 20.9"><circle cx="10.6" cy="6.4" r="2.8" fill="#888" stroke="#ddd" stroke-width="0.7"/><circle cx="14" cy="6.8" r="2.8" fill="#9a9a9a"/><path d="M8.6 8.4l-4 4" stroke="#eee" stroke-width="1.3" stroke-linecap="round"/></svg></div>
<div class="t" style="left:693px;top:390px;transform:translate(0.77px,0.33px) rotate(0.03deg);font-size:4.4px;color:#f0f0f0;font-weight:bold;">缩</div>
<div class="t" style="left:700px;top:390px;transform:translate(0.48px,0.31px) rotate(0.03deg);font-size:4.4px;color:#f0f0f0;font-weight:bold;">放</div>
<div class="sb " style="top:400.9px"><svg style="left:0;top:0" width="21.2" height="20.9" viewBox="0 0 21.2 20.9"><circle cx="9.6" cy="9.2" r="3.2" fill="#aaa"/><path d="M7.4 6.8v-1.4a2 2 0 0 1 4 0v1" fill="none" stroke="#ddd" stroke-width="1"/><path d="M13 6.6a3.4 3.4 0 0 1 0.4 6l-1.4-0.6" fill="none" stroke="#eee" stroke-width="1"/></svg></div>
<div class="t" style="left:693px;top:415px;transform:translate(0.77px,0.18px) rotate(0.03deg);font-size:4.4px;color:#f0f0f0;font-weight:bold;">旋</div>
<div class="t" style="left:700px;top:415px;transform:translate(0.48px,0.25px) rotate(0.03deg);font-size:4.4px;color:#f0f0f0;font-weight:bold;">转</div>
<div class="sb dim" style="top:424.0px"><svg style="left:0;top:0" width="21.2" height="20.9" viewBox="0 0 21.2 20.9"><g fill="none" stroke="#505050" stroke-width="0.6"><rect x="4.6" y="4" width="12.4" height="8"/><path d="M8.7 4v8M12.8 4v8M4.6 8h12.4"/></g></svg></div>
<div class="t" style="left:695px;top:437px;transform:translate(0.00px,0.52px) rotate(0.03deg);font-size:3.8px;color:#4c4c4c;">PolyF</div>
<div class="sb dim" style="top:447.5px"><svg style="left:0;top:0" width="21.2" height="20.9" viewBox="0 0 21.2 20.9"><rect x="9.4" y="3.6" width="7" height="6.6" fill="none" stroke="#5a5a5a" stroke-width="0.6"/><circle cx="8.6" cy="9.6" r="3.2" fill="#484848"/></svg></div>
<div class="t" style="left:693px;top:460px;transform:translate(0.95px,0.83px) rotate(0.03deg);font-size:4.4px;color:#5c5c5c;">透</div>
<div class="t" style="left:700px;top:461px;transform:translate(0.52px,0.07px) rotate(0.03deg);font-size:4.4px;color:#5c5c5c;">明</div>
<div class="dor b" style="left:688.5px;top:470.2px;width:22.1px;height:21.8px;border-radius:2.5px;border:0.5px solid #8f6230"></div>
<svg style="left:688.5px;top:470.2px" width="22.1" height="21.8" viewBox="688.5 470.2 22.1 21.8"><path d="M695.2 481.8c-0.6-3.6 1.4-6.4 4.4-6.6c2-0.1 3.6 0.8 4.2 2.2l-7.4 5.6z" fill="#66421c"/><path d="M703 478.4c1.6 1.4 2.2 3.4 1.8 5.2" fill="none" stroke="#76501f" stroke-width="0.6"/><path d="M694.8 482.8l9.4-7.8" stroke="#5e3c1a" stroke-width="0.8"/></svg>
<div class="t" style="left:694px;top:484px;transform:translate(0.25px,0.67px) rotate(0.03deg);font-size:4.5px;color:#5e3c1a;font-weight:bold;letter-spacing:1.275px;">幽灵</div>
<div class="b" style="left:688.9px;top:493.5px;width:21.5px;height:21.2px;background:#1e1e1e;border-radius:2.5px"></div>
<div class="t" style="left:690px;top:494px;transform:translate(0.65px,0.40px) rotate(0.03deg);font-size:4.0px;color:#d8d8d8;font-weight:bold;letter-spacing:0.267px;">Dynamic</div>
<svg style="left:688.9px;top:493.5px" width="21.5" height="21.2" viewBox="688.9 493.5 21.5 21.2"><circle cx="695.2" cy="503.4" r="2.5" fill="#858585"/><circle cx="703.2" cy="503.4" r="2.5" fill="#858585"/><rect x="695" y="503" width="8.4" height="2.9" fill="#858585"/><circle cx="699.3" cy="501.3" r="2.9" fill="#d4d4d4"/><rect x="698.6" y="505" width="1.4" height="1.8" fill="#1e1e1e"/></svg>
<div class="t" style="left:694px;top:507px;transform:translate(0.38px,0.42px) rotate(0.03deg);font-size:4.5px;color:#f4f4f4;font-weight:bold;letter-spacing:1.150px;">孤立</div>
<div class="b" style="left:688.7px;top:517.3px;width:21.5px;height:21px;background:#272727;border-radius:2.5px"></div>
<svg style="left:688.7px;top:517.3px" width="21.5" height="19" viewBox="0 0 21.5 19"><g stroke="#5c5c5c" stroke-width="0.7" stroke-dasharray="1 1"><path d="M5.4 3.6l2.4 1.6M16 3.6l-2.4 1.6M5 8h3M16.4 8h-3M5.4 11.6l2.4-1.2M16 11.6l-2.4-1.2"/></g></svg>
<div class="t" style="left:694px;top:530px;transform:translate(0.00px,0.50px) rotate(0.03deg);font-size:4.0px;color:#4a4a4a;">Xpose</div>
<div style="left:730.8px;top:26.8px;width:24px;height:155px;background:#262626;border:0.6px solid #3a3a3a;border-radius:3px"></div>
<div class="tp" style="top:30.2px"></div>
<div class="t" style="left:734px;top:32px;transform:translate(0.55px,0.05px) rotate(0.03deg);font-size:6.0px;color:#e8e8e8;letter-spacing:0.467px;">载入工具</div>
<div class="tp" style="top:41.9px"></div>
<div class="t" style="left:734px;top:43px;transform:translate(0.67px,0.60px) rotate(0.03deg);font-size:6.0px;color:#e8e8e8;letter-spacing:0.375px;">保存</div>
<div class="tp" style="top:53.4px"></div>
<div class="t" style="left:734px;top:55px;transform:translate(0.55px,0.28px) rotate(0.03deg);font-size:6.0px;color:#e8e8e8;letter-spacing:0.850px;">从项目</div>
<div class="tp" style="top:65.1px"></div>
<div class="t" style="left:734px;top:66px;transform:translate(0.55px,0.85px) rotate(0.03deg);font-size:6.0px;color:#e8e8e8;letter-spacing:0.467px;">复制工具</div>
<div class="tp" style="top:76.8px"></div>
<div class="t" style="left:734px;top:78px;transform:translate(0.42px,0.33px) rotate(0.03deg);font-size:6.0px;color:#e8e8e8;letter-spacing:0.625px;">导入</div>
<div class="tp" style="top:88.2px"></div>
<div class="t" style="left:734px;top:89px;transform:translate(0.55px,0.91px) rotate(0.03deg);font-size:6.0px;color:#e8e8e8;letter-spacing:0.500px;">克隆</div>
<div class="t" style="left:734px;top:101px;transform:translate(0.65px,0.89px) rotate(0.03deg);font-size:6.2px;color:#666;letter-spacing:-0.262px;">GoZ</div>
<div class="tp" style="top:111.6px"></div>
<div class="t" style="left:734px;top:113px;transform:translate(0.55px,0.43px) rotate(0.03deg);font-size:6.0px;color:#e8e8e8;letter-spacing:0.300px;">灯箱</div>
<div class="t" style="left:747px;top:113px;transform:translate(0.20px,0.69px) rotate(0.03deg);font-size:5.6px;color:#e8e8e8;font-family:'DejaVu Sans',sans-serif;">▶</div>
<div class="t" style="left:734px;top:123px;transform:translate(0.52px,0.90px) rotate(0.03deg);font-size:6.8px;color:#f0f0f0;">Simpl</div>
<div style="left:733px;top:131.3px;width:17px;height:0.8px;background:#666"></div><div class="kn" style="left:736.2px;top:130.2px;width:7.1px;height:2.5px"></div>
<div style="left:733.4px;top:134.9px;width:20px;height:44.4px;background:#3d3d3d;border-radius:2px"></div>
<svg style="left:733.4px;top:134.9px" width="16.6" height="44.4" viewBox="733.4 134.9 16.6 44.4"><defs><radialGradient id="og" cx="0.42" cy="0.32" r="0.75"><stop offset="0" stop-color="#ffd95a"/><stop offset="0.45" stop-color="#f59312"/><stop offset="1" stop-color="#7a3204"/></radialGradient></defs><ellipse cx="746.8" cy="162.4" rx="8.3" ry="9.8" fill="url(#og)"/><ellipse cx="752.2" cy="146.5" rx="4.6" ry="7.2" fill="url(#og)"/><path d="M744 157.5c2.6-0.6 4.6 0.6 5.4 2.8c0.6 1.8 0 3.6-1.2 5" stroke="#6a2c04" stroke-width="1.6" fill="none" opacity="0.75"/><path d="M741.6 166.5c2 2.2 5 2.6 8.4 0.6" stroke="#ffe27a" stroke-width="1.4" fill="none" opacity="0.9"/></svg>
<div class="t" style="left:736px;top:172px;transform:translate(0.23px,0.38px) rotate(0.03deg);font-size:7.2px;color:#e4e4e4;">Simpl</div>
</body>
</html>
